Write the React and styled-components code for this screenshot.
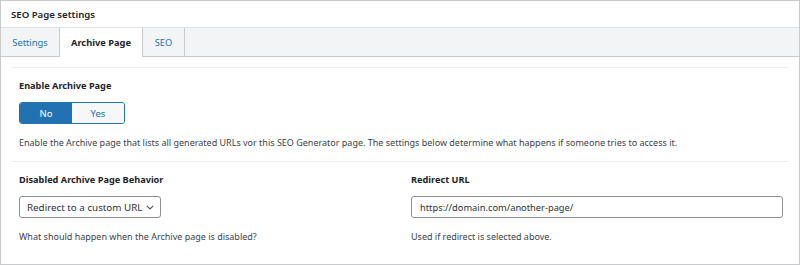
import React from "react";
import styled, { createGlobalStyle } from "styled-components";

const Global = createGlobalStyle`
  html, body { margin: 0; padding: 0; background: #fff; }
  body { font-family: "Noto Sans", "Open Sans", sans-serif; color: #1d2327; }
  * { box-sizing: border-box; }
`;

const Panel = styled.div`
  width: 800px;
  height: 265px;
  border: 1px solid #c9cacc;
  background: #fff;
  display: flex;
  flex-direction: column;
`;

const Title = styled.div`
  height: 26px;
  padding: 0 10px;
  display: flex;
  align-items: center;
  font-size: 9.6px;
  font-weight: 600;
  color: #1d2327;
`;

const TabBar = styled.div`
  display: flex;
  background: #f3f4f5;
  border-top: 1px solid #e2e3e4;
  border-bottom: 1px solid #c9cacc;
  height: 30px;
`;

const Tab = styled.div`
  display: flex;
  align-items: center;
  justify-content: center;
  width: ${(p) => p.$w}px;
  font-size: 9.3px;
  font-weight: ${(p) => (p.$active ? 700 : 400)};
  color: ${(p) => (p.$active ? "#1d2327" : "#2271b1")};
  background: ${(p) => (p.$active ? "#fff" : "transparent")};
  border-right: 1px solid #c9cacc;
  margin-bottom: ${(p) => (p.$active ? "-1px" : "0")};
`;

const Content = styled.div`
  padding: 10px 10px 0;
  flex: 1;
`;

const Row = styled.div`
  border-top: 1px solid #eeeff0;
  padding: ${(p) => (p.$split ? "11px 8px 9px" : "11px 8px 11px")};
  display: grid;
  grid-template-columns: ${(p) => (p.$split ? "372px 1fr" : "1fr")};
  column-gap: 20px;
`;

const Field = styled.div`
  display: flex;
  flex-direction: column;
  align-items: flex-start;
`;

const Label = styled.div`
  font-size: 9.2px;
  font-weight: 700;
  color: #1d2327;
  line-height: 14px;
  margin-bottom: 9px;
`;

const Toggle = styled.div`
  display: flex;
  border: 1px solid #2271b1;
  border-radius: 3px;
  overflow: hidden;
  margin-bottom: 12px;
`;

const ToggleBtn = styled.div`
  width: 52px;
  height: 20px;
  display: flex;
  align-items: center;
  justify-content: center;
  font-size: 9.5px;
  background: ${(p) => (p.$on ? "#2271b1" : "#f6f7f7")};
  color: ${(p) => (p.$on ? "#fff" : "#2271b1")};
`;

const Help = styled.div`
  font-size: 9px;
  color: #3c434a;
  line-height: 14px;
`;

const Select = styled.div`
  height: 22px;
  border: 1px solid #8c8f94;
  border-radius: 3px;
  padding: 0 6px 0 7px;
  display: flex;
  align-items: center;
  gap: 4px;
  font-size: 9.8px;
  color: #2c3338;
  margin-bottom: 12px;
  background: #fff;
`;

const Input = styled.div`
  width: 372px;
  height: 22px;
  border: 1px solid #8c8f94;
  border-radius: 3px;
  padding: 0 8px;
  display: flex;
  align-items: center;
  font-size: 9.3px;
  color: #2c3338;
  margin-bottom: 12px;
  background: #fff;
`;

const Chevron = () => (
  <svg width="8" height="5" viewBox="0 0 8 5" fill="none">
    <path d="M0.8 0.8l3.2 3.2L7.2 0.8" stroke="#50575e" strokeWidth="1.2" />
  </svg>
);

export default function App() {
  return (
    <>
      <Global />
      <Panel>
        <Title>SEO Page settings</Title>
        <TabBar>
          <Tab $w={59}>Settings</Tab>
          <Tab $w={83} $active>Archive Page</Tab>
          <Tab $w={42}>SEO</Tab>
        </TabBar>
        <Content>
          <Row>
            <Field>
              <Label>Enable Archive Page</Label>
              <Toggle>
                <ToggleBtn $on>No</ToggleBtn>
                <ToggleBtn>Yes</ToggleBtn>
              </Toggle>
              <Help>
                Enable the Archive page that lists all generated URLs vor this SEO Generator page. The settings below determine what happens if someone tries to access it.
              </Help>
            </Field>
          </Row>
          <Row $split>
            <Field>
              <Label>Disabled Archive Page Behavior</Label>
              <Select>
                Redirect to a custom URL <Chevron />
              </Select>
              <Help>What should happen when the Archive page is disabled?</Help>
            </Field>
            <Field>
              <Label>Redirect URL</Label>
              <Input>https://domain.com/another-page/</Input>
              <Help>Used if redirect is selected above.</Help>
            </Field>
          </Row>
        </Content>
      </Panel>
    </>
  );
}
